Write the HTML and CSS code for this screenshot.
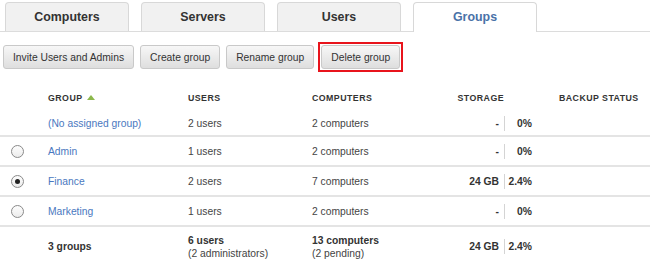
FILE: index.html
```html
<!DOCTYPE html>
<html lang="en">

<head>
    <meta charset="UTF-8">
    <meta name="viewport" content="width=device-width, initial-scale=1.0">
    <title>Groups</title>
    <link rel="stylesheet" href="styles.css">
</head>

<body>
    <div class="tabs">
        <div class="tab">Computers</div>
        <div class="tab">Servers</div>
        <div class="tab">Users</div>
        <div class="tab tab-active">Groups</div>
    </div>

    <div class="toolbar">
        <button class="btn">Invite Users and Admins</button>
        <button class="btn">Create group</button>
        <button class="btn">Rename group</button>
        <div class="highlight">
            <button class="btn">Delete group</button>
        </div>
    </div>

    <div class="table">
        <div class="row row-head">
            <div class="cell"></div>
            <div class="cell">Group <span class="sort"></span></div>
            <div class="cell">Users</div>
            <div class="cell">Computers</div>
            <div class="cell storage-head">Storage</div>
            <div class="cell"></div>
            <div class="cell">Backup status</div>
        </div>

        <div class="row">
            <div class="cell"></div>
            <div class="cell"><a class="link">(No assigned group)</a></div>
            <div class="cell">2 users</div>
            <div class="cell">2 computers</div>
            <div class="cell storage"><b>-</b><span class="sep"></span><b class="pct">0%</b></div>
            <div class="cell"></div>
            <div class="cell"></div>
        </div>

        <div class="row">
            <div class="cell"><span class="radio"></span></div>
            <div class="cell"><a class="link">Admin</a></div>
            <div class="cell">1 users</div>
            <div class="cell">2 computers</div>
            <div class="cell storage"><b>-</b><span class="sep"></span><b class="pct">0%</b></div>
            <div class="cell"></div>
            <div class="cell"></div>
        </div>

        <div class="row">
            <div class="cell"><span class="radio checked"></span></div>
            <div class="cell"><a class="link">Finance</a></div>
            <div class="cell">2 users</div>
            <div class="cell">7 computers</div>
            <div class="cell storage"><b>24 GB</b><span class="sep"></span><b class="pct">2.4%</b></div>
            <div class="cell"></div>
            <div class="cell"></div>
        </div>

        <div class="row">
            <div class="cell"><span class="radio"></span></div>
            <div class="cell"><a class="link">Marketing</a></div>
            <div class="cell">1 users</div>
            <div class="cell">2 computers</div>
            <div class="cell storage"><b>-</b><span class="sep"></span><b class="pct">0%</b></div>
            <div class="cell"></div>
            <div class="cell"></div>
        </div>

        <div class="row row-total">
            <div class="cell"></div>
            <div class="cell"><b>3 groups</b></div>
            <div class="cell"><b>6 users</b><br>(2 administrators)</div>
            <div class="cell"><b>13 computers</b><br>(2 pending)</div>
            <div class="cell storage"><b>24 GB</b><span class="sep"></span><b class="pct">2.4%</b></div>
            <div class="cell"></div>
            <div class="cell"></div>
        </div>
    </div>
</body>

</html>
```

FILE: styles.css
```css
body {
    margin: 0;
    font-family: "Liberation Sans", Arial, sans-serif;
    font-size: 10.3px;
    color: #444;
    background-color: white;
}

.tabs {
    display: flex;
    gap: 12px;
    padding-left: 5px;
    padding-top: 2px;
    height: 29px;
    border-bottom: 1px solid #dcdcdc;
}

.tab {
    width: 124px;
    height: 29px;
    border: 1px solid #d8d8d8;
    border-bottom: none;
    border-radius: 4px 4px 0 0;
    background-color: #f1f1f1;
    font-size: 12.4px;
    font-weight: bold;
    color: #333;
    display: flex;
    align-items: center;
    justify-content: center;
    padding-bottom: 1px;
    box-sizing: border-box;
}

.tab-active {
    background-color: white;
    color: #4a72a8;
    height: 30px;
    margin-bottom: -1px;
}

.toolbar {
    display: flex;
    align-items: center;
    gap: 6px;
    padding-left: 3px;
    margin-top: 10px;
}

.btn {
    font-family: "Liberation Sans", Arial, sans-serif;
    font-size: 10.3px;
    color: #333;
    height: 24px;
    padding: 0 9px;
    border: 1px solid #c9c9c9;
    border-radius: 3px;
    background: linear-gradient(#f7f7f7, #dedede);
}

.highlight {
    border: 2px solid #e8141c;
    padding: 1px;
    display: flex;
    margin-left: -2px;
}

.table {
    margin-top: 13px;
}

.row {
    display: grid;
    grid-template-columns: 48px 140px 124px 118px 102px 27px 91px;
    align-items: center;
    height: 28px;
    border-bottom: 2px solid #e4e4e4;
}

.row-head {
    height: 26px;
    border-bottom: none;
    font-size: 8.8px;
    font-weight: bold;
    letter-spacing: 0.45px;
    text-transform: uppercase;
    color: #333;
}

.row-head + .row {
    height: 24px;
}

.row-total {
    height: 39px;
    border-bottom: none;
    line-height: 13px;
}

.row-total b {
    color: #333;
}

.sort {
    display: inline-block;
    width: 0;
    height: 0;
    border-left: 4px solid transparent;
    border-right: 4px solid transparent;
    border-bottom: 5px solid #8cb84c;
    margin-left: 2px;
    vertical-align: 1px;
}

.storage-head {
    text-align: right;
    padding-right: 28px;
}

.link {
    color: #4a78c0;
}

.storage {
    display: flex;
    justify-content: flex-end;
    align-items: center;
}

.storage b {
    color: #333;
}

.sep {
    width: 1px;
    height: 15px;
    background-color: #d4d4d4;
    margin-left: 5px;
}

.pct {
    width: 27px;
    text-align: right;
}

.radio {
    display: block;
    width: 11px;
    height: 11px;
    border: 1px solid #8a8a8a;
    border-radius: 50%;
    margin-left: 11px;
    background: linear-gradient(#fdfdfd, #ececec);
    position: relative;
}

.checked::after {
    content: "";
    position: absolute;
    width: 5px;
    height: 5px;
    border-radius: 50%;
    background-color: #222;
    left: 3px;
    top: 3px;
}
```
